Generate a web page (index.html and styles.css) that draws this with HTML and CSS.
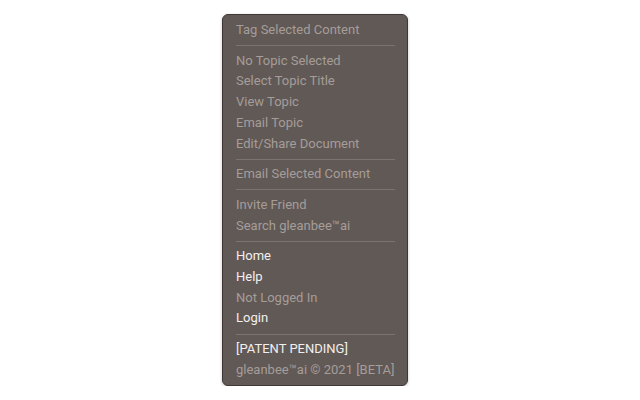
FILE: index.html
```html
<!DOCTYPE html>
<html lang="en">
<head>
  <meta charset="UTF-8">
  <title>gleanbee menu</title>
  <link rel="stylesheet" href="styles.css">
</head>
<body>
  <div class="menu">
    <div class="item off">Tag Selected Content</div>
    <div class="sep"></div>
    <div class="item off">No Topic Selected</div>
    <div class="item off">Select Topic Title</div>
    <div class="item off">View Topic</div>
    <div class="item off">Email Topic</div>
    <div class="item off">Edit/Share Document</div>
    <div class="sep"></div>
    <div class="item off">Email Selected Content</div>
    <div class="sep"></div>
    <div class="item off">Invite Friend</div>
    <div class="item off">Search gleanbee&trade;ai</div>
    <div class="sep"></div>
    <div class="item">Home</div>
    <div class="item">Help</div>
    <div class="item off">Not Logged In</div>
    <div class="item">Login</div>
    <div class="sep"></div>
    <div class="item">[PATENT PENDING]</div>
    <div class="item off">gleanbee&trade;ai &copy; 2021 [BETA]</div>
  </div>
</body>
</html>
```

FILE: styles.css
```css
body {
  margin: 0;
  padding: 14px 0 0 222px;
  background: #fff;
  font-family: Roboto, "Liberation Sans", Arial, sans-serif;
}

.menu {
  width: 184px;
  box-sizing: content-box;
  padding: 5px 0 4px 0;
  background-color: #615956;
  border: 1px solid #3d3836;
  border-radius: 6px;
  box-shadow: 0 1px 3px rgba(0,0,0,0.25);
}

.item {
  padding-left: 13px;
  font-size: 13px;
  line-height: 20.7px;
  color: #f3efed;
  white-space: nowrap;
}

.item.off {
  color: #a59d99;
}

.sep {
  height: 1px;
  margin: 4.5px 12px 4.5px 13px;
  background-color: #7b7370;
}
```
